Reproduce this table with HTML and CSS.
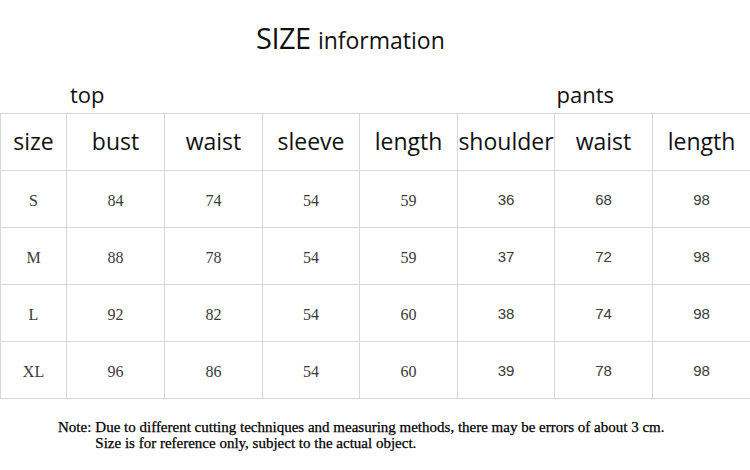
FILE: index.html
```html
<!DOCTYPE html>
<html>
<head>
<meta charset="utf-8">
<link rel="stylesheet" href="styles.css">
</head>
<body>
<div class="page">
  <div class="title"><span class="big">SIZE</span> <span class="small">information</span></div>
  <div class="labels"><span class="lab-top">top</span><span class="lab-pants">pants</span></div>
  <table class="grid">
    <colgroup>
      <col class="c66"><col class="c98"><col class="c98"><col class="c97"><col class="c98"><col class="c97"><col class="c98"><col class="c98">
    </colgroup>
    <tr class="head">
      <th>size</th><th>bust</th><th>waist</th><th>sleeve</th><th>length</th><th>shoulder</th><th>waist</th><th>length</th>
    </tr>
    <tr><td>S</td><td>84</td><td>74</td><td>54</td><td>59</td><td class="sans">36</td><td class="sans">68</td><td class="sans">98</td></tr>
    <tr><td>M</td><td>88</td><td>78</td><td>54</td><td>59</td><td class="sans">37</td><td class="sans">72</td><td class="sans">98</td></tr>
    <tr><td>L</td><td>92</td><td>82</td><td>54</td><td>60</td><td class="sans">38</td><td class="sans">74</td><td class="sans">98</td></tr>
    <tr><td>XL</td><td>96</td><td>86</td><td>54</td><td>60</td><td class="sans">39</td><td class="sans">78</td><td class="sans">98</td></tr>
  </table>
  <div class="note">
    <span class="note-label">Note:</span>
    <div class="note-text">
      <div>Due to different cutting techniques and measuring methods, there may be errors of about 3 cm.</div>
      <div>Size is for reference only, subject to the actual object.</div>
    </div>
  </div>
</div>
</body>
</html>
```
FILE: styles.css
```css
html, body {
  margin: 0;
  padding: 0;
  background: #ffffff;
}
.page {
  width: 750px;
  height: 470px;
  overflow: hidden;
}
.title {
  height: 52px;
  padding: 18px 0 0 256px;
  line-height: 40px;
  font-family: "Open Sans", "Noto Sans", sans-serif;
  color: #111;
  white-space: nowrap;
}
.title .big {
  font-size: 29px;
  letter-spacing: -0.5px;
}
.title .small {
  font-size: 23px;
  margin-left: 3px;
}
.labels {
  height: 34px;
  padding-top: 9px;
  line-height: 30px;
  font-family: "Open Sans", "Noto Sans", sans-serif;
  font-size: 22px;
  color: #111;
  display: flex;
}
.lab-top {
  margin-left: 70px;
}
.lab-pants {
  margin-left: 452px;
}
.grid {
  border-collapse: collapse;
  table-layout: fixed;
  width: 750px;
}
.c66 { width: 66px; }
.c97 { width: 97px; }
.c98 { width: 98px; }
.grid th, .grid td {
  border: 1px solid #d6d6d6;
  text-align: center;
  vertical-align: middle;
  padding: 0;
  white-space: nowrap;
}
.grid tr {
  height: 57px;
}
.grid th {
  font-family: "Open Sans", "Noto Sans", sans-serif;
  font-weight: normal;
  font-size: 23px;
  color: #111;
  padding-bottom: 2px;
}
.grid td {
  font-family: "Liberation Serif", serif;
  font-size: 16px;
  color: #3a3a3a;
  padding-top: 3px;
}
.grid td.sans {
  font-family: "Liberation Sans", sans-serif;
  font-size: 15px;
  padding-top: 1px;
}
.note {
  display: flex;
  gap: 4px;
  margin-top: 20px;
  padding-left: 58px;
  font-family: "Liberation Serif", serif;
  font-size: 15px;
  line-height: 16px;
  color: #000;
  white-space: nowrap;
  -webkit-text-stroke: 0.25px #000;
}
```
